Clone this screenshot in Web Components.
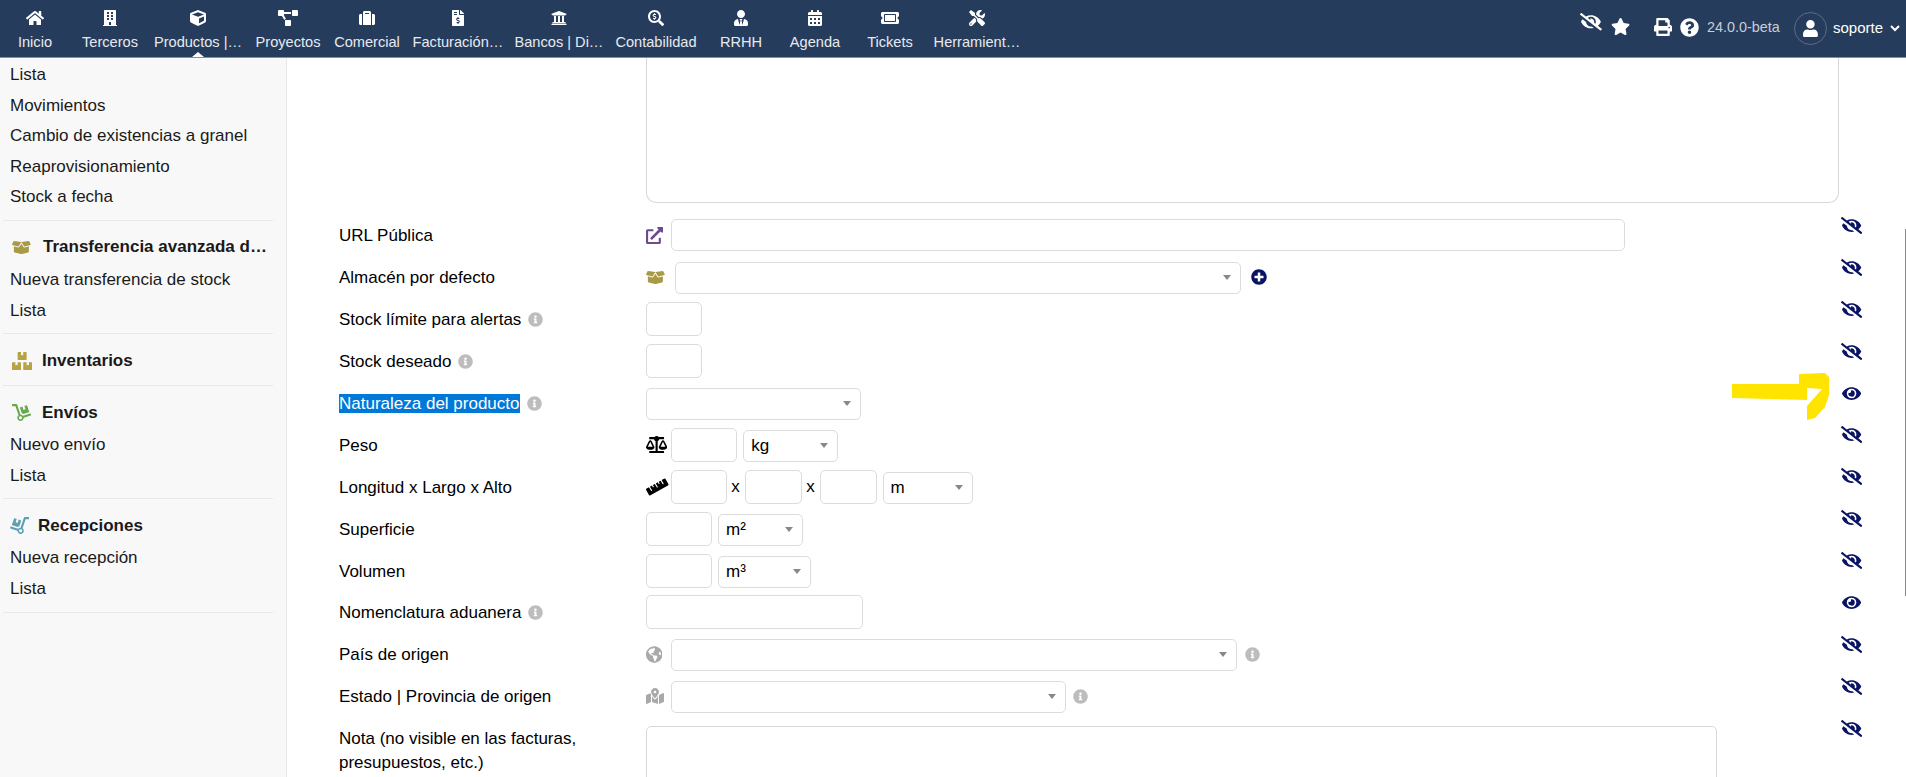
<!DOCTYPE html>
<html lang="es"><head><meta charset="utf-8"><title>Producto</title>
<style>
html,body{margin:0;padding:0;height:100%;overflow:hidden;background:#fff;font-family:"Liberation Sans",Arial,sans-serif;font-size:17px;color:#000}
</style></head><body>
<x-app>
  <x-navbar slot="nav">
    <x-nav-item icon="home" label="Inicio" w="70"></x-nav-item>
    <x-nav-item icon="building" label="Terceros" w="80"></x-nav-item>
    <x-nav-item icon="cube" label="Productos |…" w="96" active></x-nav-item>
    <x-nav-item icon="diagram" label="Proyectos" w="84"></x-nav-item>
    <x-nav-item icon="suitcase" label="Comercial" w="74"></x-nav-item>
    <x-nav-item icon="invoice" label="Facturación…" w="108"></x-nav-item>
    <x-nav-item icon="bank" label="Bancos | Di…" w="94"></x-nav-item>
    <x-nav-item icon="searchdollar" label="Contabilidad" w="100"></x-nav-item>
    <x-nav-item icon="usertie" label="RRHH" w="70"></x-nav-item>
    <x-nav-item icon="calendar" label="Agenda" w="78"></x-nav-item>
    <x-nav-item icon="ticket" label="Tickets" w="72"></x-nav-item>
    <x-nav-item icon="tools" label="Herramient…" w="102"></x-nav-item>
  </x-navbar>
  <x-sidebar slot="side">
    <x-side-section>
      <x-side-link>Lista</x-side-link><x-side-link>Movimientos</x-side-link><x-side-link>Cambio de existencias a granel</x-side-link><x-side-link>Reaprovisionamiento</x-side-link><x-side-link>Stock a fecha</x-side-link>
    </x-side-section>
    <x-side-section title-text="Transferencia avanzada d…" icon="boxopen" color="#a99a45" isize="15" iw="31">
      <x-side-link>Nueva transferencia de stock</x-side-link><x-side-link>Lista</x-side-link>
    </x-side-section>
    <x-side-section title-text="Inventarios" icon="boxes" color="#b5a345" isize="18" iw="30">
      </x-side-section>
    <x-side-section title-text="Envíos" icon="dolly" color="#6aa84f" isize="17" iw="30">
      <x-side-link>Nuevo envío</x-side-link><x-side-link>Lista</x-side-link>
    </x-side-section>
    <x-side-section title-text="Recepciones" icon="dolly" color="#5f9fb3" isize="17" iw="28" flip start="0">
      <x-side-link>Nueva recepción</x-side-link><x-side-link>Lista</x-side-link>
    </x-side-section>
  </x-sidebar>
  <x-form-area slot="main">
    <x-top-note></x-top-note>
    <x-form-row label="URL Pública"><x-icon name="external" size="17" color="#6c4a8d" style="margin-right:8px"></x-icon><x-field w="954" style="height:32px;margin-bottom:1px"></x-field></x-form-row>
    <x-form-row label="Almacén por defecto"><x-icon name="boxopen" size="15" color="#a99a45" style="margin-right:10px"></x-icon><x-pick w="566"></x-pick><x-icon name="plus" size="16" color="#0a1464" style="margin-left:10px"></x-icon></x-form-row>
    <x-form-row label="Stock límite para alertas" info><x-field w="56"></x-field></x-form-row>
    <x-form-row label="Stock deseado" info><x-field w="56"></x-field></x-form-row>
    <x-form-row label="Naturaleza del producto" info selected><x-pick w="215"></x-pick></x-form-row>
    <x-form-row label="Peso"><x-icon name="scale" size="17" color="#000" style="margin-right:4px"></x-icon><x-field w="66"></x-field><x-pick w="95" style="margin-left:6px">kg</x-pick></x-form-row>
    <x-form-row label="Longitud x Largo x Alto"><x-icon name="ruler" size="18" color="#000" style="margin-right:2px"></x-icon><x-field w="56"></x-field><x-sep>x</x-sep><x-field w="57"></x-field><x-sep>x</x-sep><x-field w="57"></x-field><x-pick w="90" style="margin-left:6px">m</x-pick></x-form-row>
    <x-form-row label="Superficie"><x-field w="66"></x-field><x-pick w="85" style="margin-left:6px">m²</x-pick></x-form-row>
    <x-form-row label="Volumen"><x-field w="66"></x-field><x-pick w="93" style="margin-left:6px">m³</x-pick></x-form-row>
    <x-form-row label="Nomenclatura aduanera" info><x-field w="217"></x-field></x-form-row>
    <x-form-row label="País de origen"><x-icon name="globe" size="17" color="#a9a9a9" style="margin-right:8.6px"></x-icon><x-pick w="566"></x-pick><x-icon name="info" size="15" color="#bdbdbd" style="margin-left:8px"></x-icon></x-form-row>
    <x-form-row label="Estado | Provincia de origen"><x-icon name="map" size="16" color="#a9a9a9" style="margin-right:7px"></x-icon><x-pick w="395"></x-pick><x-icon name="info" size="15" color="#bdbdbd" style="margin-left:7px"></x-icon></x-form-row>
    <x-note-row label="Nota (no visible en las facturas, presupuestos, etc.)"></x-note-row>
  </x-form-area>
  <x-eye-column slot="eyes" open="4,9" count="13"></x-eye-column>
</x-app>
<script>
const P={
home:[576,"M280.37 148.26L96 300.11V464a16 16 0 0 0 16 16l112.06-.29a16 16 0 0 0 15.92-16V368a16 16 0 0 1 16-16h64a16 16 0 0 1 16 16v95.64a16 16 0 0 0 16 16.05L464 480a16 16 0 0 0 16-16V300L295.67 148.26a12.19 12.19 0 0 0-15.3 0zM571.6 251.47L488 182.56V44.05a12 12 0 0 0-12-12h-56a12 12 0 0 0-12 12v72.61L318.47 43a48 48 0 0 0-61 0L4.34 251.47a12 12 0 0 0-1.6 16.9l25.5 31A12 12 0 0 0 45.15 301l235.22-193.74a12.19 12.19 0 0 1 15.3 0L530.9 301a12 12 0 0 0 16.9-1.6l25.5-31a12 12 0 0 0-1.7-16.93z"],
eye:[576,"M572.52 241.4C518.29 135.59 410.93 64 288 64S57.68 135.64 3.48 241.41a32.35 32.35 0 0 0 0 29.19C57.71 376.41 165.07 448 288 448s230.32-71.64 284.52-177.41a32.35 32.35 0 0 0 0-29.19zM288 400a144 144 0 1 1 144-144 143.93 143.93 0 0 1-144 144zm0-240a95.31 95.31 0 0 0-25.31 3.79 47.85 47.85 0 0 1-66.9 66.9A95.78 95.78 0 1 0 288 160z"],
eyeslash:[640,"M320 400c-75.85 0-137.25-58.71-142.9-133.11L72.2 185.82c-13.79 17.3-26.48 35.59-36.72 55.59a32.35 32.35 0 0 0 0 29.19C89.71 376.41 197.07 448 320 448c26.91 0 52.87-4 77.89-10.46L346 397.39a144.13 144.13 0 0 1-26 2.61zm313.82 58.1l-110.55-85.44a331.25 331.25 0 0 0 81.25-102.07 32.35 32.35 0 0 0 0-29.19C550.29 135.59 442.93 64 320 64a308.15 308.15 0 0 0-147.32 37.7L45.46 3.37A16 16 0 0 0 23 6.18L3.37 31.45A16 16 0 0 0 6.18 53.9l588.36 454.73a16 16 0 0 0 22.46-2.81l19.64-25.27a16 16 0 0 0-2.82-22.45zm-183.72-142l-39.3-30.38A94.75 94.75 0 0 0 416 256a94.76 94.76 0 0 0-121.31-92.21A47.65 47.65 0 0 1 304 192a46.64 46.64 0 0 1-1.54 10l-73.61-56.89A142.31 142.31 0 0 1 320 112a143.92 143.92 0 0 1 144 144c0 21.63-5.29 41.79-13.9 60.11z"],
star:[576,"M259.3 17.8L194 150.2 47.9 171.5c-26.2 3.8-36.7 36.1-17.7 54.6l105.7 103-25 145.5c-4.5 26.3 23.2 46 46.4 33.7L288 439.6l130.7 68.7c23.2 12.2 50.9-7.4 46.4-33.7l-25-145.5 105.7-103c19-18.5 8.5-50.8-17.7-54.6L382 150.2 316.7 17.8c-11.7-23.6-45.6-23.9-57.4 0z"],
print:[512,"M448 192V77.25c0-8.49-3.37-16.62-9.37-22.63L393.37 9.37c-6-6-14.14-9.37-22.63-9.37H96C78.33 0 64 14.33 64 32v160c-35.35 0-64 28.65-64 64v112c0 8.84 7.16 16 16 16h48v96c0 17.67 14.33 32 32 32h320c17.67 0 32-14.33 32-32v-96h48c8.84 0 16-7.16 16-16V256c0-35.35-28.65-64-64-64zm-64 256H128v-96h256v96zm0-224H128V64h192v48c0 8.84 7.16 16 16 16h48v96zm48 72c-13.25 0-24-10.75-24-24 0-13.26 10.75-24 24-24s24 10.74 24 24c0 13.25-10.75 24-24 24z"],
question:[512,"M504 256c0 136.997-111.043 248-248 248S8 392.997 8 256C8 119.083 119.043 8 256 8s248 111.083 248 248zM262.655 90c-54.497 0-89.255 22.957-116.549 63.758-3.536 5.286-2.353 12.415 2.715 16.258l34.699 26.31c5.205 3.947 12.621 3.008 16.665-2.122 17.864-22.658 30.113-35.797 57.303-35.797 20.429 0 45.698 13.148 45.698 32.958 0 14.976-12.363 22.667-32.534 33.976C247.128 238.528 216 254.941 216 296v4c0 6.627 5.373 12 12 12h56c6.627 0 12-5.373 12-12v-1.333c0-28.462 83.186-29.647 83.186-106.667 0-58.002-60.165-102-116.531-102zM256 338c-25.365 0-46 20.635-46 46 0 25.364 20.635 46 46 46s46-20.636 46-46c0-25.365-20.635-46-46-46z"],
info:[512,"M256 8C119.043 8 8 119.083 8 256c0 136.997 111.043 248 248 248s248-111.003 248-248C504 119.083 392.957 8 256 8zm0 110c23.196 0 42 18.804 42 42s-18.804 42-42 42-42-18.804-42-42 18.804-42 42-42zm56 254c0 6.627-5.373 12-12 12h-88c-6.627 0-12-5.373-12-12v-24c0-6.627 5.373-12 12-12h12v-64h-12c-6.627 0-12-5.373-12-12v-24c0-6.627 5.373-12 12-12h64c6.627 0 12 5.373 12 12v100h12c6.627 0 12 5.373 12 12v24z"],
plus:[512,"M256 8C119 8 8 119 8 256s111 248 248 248 248-111 248-248S393 8 256 8zm144 276c0 6.6-5.4 12-12 12h-92v92c0 6.6-5.4 12-12 12h-56c-6.6 0-12-5.4-12-12v-92h-92c-6.6 0-12-5.4-12-12v-56c0-6.6 5.4-12 12-12h92v-92c0-6.6 5.4-12 12-12h56c6.6 0 12 5.4 12 12v92h92c6.6 0 12 5.4 12 12v56z"],
user:[448,"M224 256c70.7 0 128-57.3 128-128S294.7 0 224 0 96 57.3 96 128s57.3 128 128 128zm89.6 32h-16.7c-22.2 10.2-46.9 16-72.9 16s-50.6-5.8-72.9-16h-16.7C60.2 288 0 348.2 0 422.4V464c0 26.5 21.5 48 48 48h352c26.5 0 48-21.5 48-48v-41.6c0-74.2-60.2-134.4-134.4-134.4z"],
external:[512,"M432,320H400a16,16,0,0,0-16,16V448H64V128H208a16,16,0,0,0,16-16V80a16,16,0,0,0-16-16H48A48,48,0,0,0,0,112V464a48,48,0,0,0,48,48H400a48,48,0,0,0,48-48V336A16,16,0,0,0,432,320ZM488,0h-128c-21.37,0-32.05,25.91-17,41l35.73,35.73L135,320.37a24,24,0,0,0,0,34L157.67,377a24,24,0,0,0,34,0L435.28,133.32,471,169c15,15,41,4.5,41-17V24A24,24,0,0,0,488,0Z"],
building:[448,"M436 480h-20V24c0-13.255-10.745-24-24-24H56C42.745 0 32 10.745 32 24v456H12c-6.627 0-12 5.373-12 12v20h448v-20c0-6.627-5.373-12-12-12zM128 76c0-6.627 5.373-12 12-12h40c6.627 0 12 5.373 12 12v40c0 6.627-5.373 12-12 12h-40c-6.627 0-12-5.373-12-12V76zm0 96c0-6.627 5.373-12 12-12h40c6.627 0 12 5.373 12 12v40c0 6.627-5.373 12-12 12h-40c-6.627 0-12-5.373-12-12v-40zm52 148h-40c-6.627 0-12-5.373-12-12v-40c0-6.627 5.373-12 12-12h40c6.627 0 12 5.373 12 12v40c0 6.627-5.373 12-12 12zm76 160h-64v-84c0-6.627 5.373-12 12-12h40c6.627 0 12 5.373 12 12v84zm64-172c0 6.627-5.373 12-12 12h-40c-6.627 0-12-5.373-12-12v-40c0-6.627 5.373-12 12-12h40c6.627 0 12 5.373 12 12v40zm0-96c0 6.627-5.373 12-12 12h-40c-6.627 0-12-5.373-12-12v-40c0-6.627 5.373-12 12-12h40c6.627 0 12 5.373 12 12v40zm0-96c0 6.627-5.373 12-12 12h-40c-6.627 0-12-5.373-12-12V76c0-6.627 5.373-12 12-12h40c6.627 0 12 5.373 12 12v40z"],
cube:[512,"M239.1 6.3l-208 78c-18.7 7-31.1 25-31.1 45v225.1c0 18.2 10.3 34.8 26.5 42.9l208 104c13.5 6.8 29.4 6.8 42.9 0l208-104c16.3-8.1 26.5-24.8 26.5-42.9V129.3c0-20-12.4-37.9-31.1-44.9l-208-78C262 2.2 250 2.2 239.1 6.3zM256 68.4l192 72v1.1l-192 78-192-78v-1.1l192-72zm32 356V275.5l160-65v133.9l-160 80z"],
diagram:[640,"M384 320H256c-17.67 0-32 14.33-32 32v128c0 17.67 14.33 32 32 32h128c17.67 0 32-14.33 32-32V352c0-17.67-14.33-32-32-32zM192 32c0-17.67-14.33-32-32-32H32C14.33 0 0 14.33 0 32v128c0 17.67 14.33 32 32 32h95.72l73.16 128.04C211.98 300.98 232.4 288 256 288h.28L192 175.51V128h224V64H192V32zM608 0H480c-17.67 0-32 14.33-32 32v128c0 17.67 14.33 32 32 32h128c17.67 0 32-14.33 32-32V32c0-17.67-14.33-32-32-32z"],
suitcase:[512,"M128 480h256V80c0-26.5-21.5-48-48-48H176c-26.5 0-48 21.5-48 48v400zm64-384h128v32H192V96zm320 80v256c0 26.5-21.5 48-48 48h-48V128h48c26.5 0 48 21.5 48 48zM96 480H48c-26.5 0-48-21.5-48-48V176c0-26.5 21.5-48 48-48h48v352z"],
invoice:[384,"M377 105L279.1 7c-4.5-4.5-10.6-7-17-7H256v128h128v-6.1c0-6.3-2.5-12.4-7-16.9zm-153 31V0H24C10.7 0 0 10.7 0 24v464c0 13.3 10.7 24 24 24h336c13.3 0 24-10.7 24-24V160H248c-13.2 0-24-10.8-24-24zM64 72c0-4.42 3.58-8 8-8h80c4.42 0 8 3.58 8 8v16c0 4.42-3.58 8-8 8H72c-4.42 0-8-3.58-8-8V72zm0 80v-16c0-4.42 3.58-8 8-8h80c4.42 0 8 3.58 8 8v16c0 4.42-3.58 8-8 8H72c-4.42 0-8-3.58-8-8zm144 263.88V440c0 4.42-3.58 8-8 8h-16c-4.42 0-8-3.58-8-8v-24.29c-11.29-.58-22.27-4.52-31.37-11.35-3.9-2.93-4.1-8.77-.57-12.14l11.75-11.21c2.77-2.64 6.89-2.76 10.13-.73 3.87 2.42 8.26 3.72 12.82 3.72h28.11c6.5 0 11.8-5.92 11.8-13.19 0-5.95-3.61-11.19-8.77-12.73l-45-13.5c-18.59-5.58-31.58-23.42-31.58-43.39 0-24.52 19.05-44.44 42.67-45.07V232c0-4.42 3.58-8 8-8h16c4.42 0 8 3.58 8 8v24.29c11.29.58 22.27 4.51 31.37 11.35 3.9 2.93 4.1 8.77.57 12.14l-11.75 11.21c-2.77 2.64-6.89 2.76-10.13.73-3.87-2.43-8.26-3.72-12.82-3.72h-28.11c-6.5 0-11.8 5.92-11.8 13.19 0 5.95 3.61 11.19 8.77 12.73l45 13.5c18.59 5.58 31.58 23.42 31.58 43.39 0 24.53-19.05 44.44-42.67 45.07z"],
bank:[512,"M496 128v16a8 8 0 0 1-8 8h-24v12c0 6.627-5.373 12-12 12H60c-6.627 0-12-5.373-12-12v-12H24a8 8 0 0 1-8-8v-16a8 8 0 0 1 4.941-7.392l232-88a7.996 7.996 0 0 1 6.118 0l232 88A8 8 0 0 1 496 128zm-24 304H40c-13.255 0-24 10.745-24 24v16a8 8 0 0 0 8 8h464a8 8 0 0 0 8-8v-16c0-13.255-10.745-24-24-24zM96 192v192H60c-6.627 0-12 5.373-12 12v20h416v-20c0-6.627-5.373-12-12-12h-36V192h-64v192h-64V192h-64v192h-64V192H96z"],
searchdollar:[512,"M505.04 442.66l-99.71-99.69c-4.5-4.5-10.6-7-17-7h-16.3c27.6-35.3 44-79.69 44-127.99C416.03 93.09 322.92 0 208.02 0S0 93.09 0 207.98s93.11 207.98 208.02 207.98c48.3 0 92.71-16.4 128.01-44v16.3c0 6.4 2.5 12.5 7 17l99.71 99.69c9.4 9.4 24.6 9.4 33.9 0l28.3-28.3c9.4-9.4 9.4-24.6.1-34zm-297.02-90.7c-79.54 0-144-64.34-144-143.98 0-79.53 64.35-143.98 144-143.98 79.54 0 144 64.34 144 143.98 0 79.53-64.35 143.98-144 143.98zm27.11-152.54l-45.01-13.5c-5.16-1.55-8.77-6.78-8.77-12.73 0-7.27 5.3-13.19 11.8-13.19h28.11c4.56 0 8.96 1.29 12.82 3.72 3.24 2.03 7.36 1.91 10.13-.73l11.75-11.21c3.53-3.37 3.33-9.21-.57-12.14-9.1-6.83-20.08-10.77-31.37-11.35V112c0-4.42-3.58-8-8-8h-16c-4.42 0-8 3.58-8 8v16.12c-23.63.63-42.68 20.55-42.68 45.07 0 19.97 12.99 37.81 31.58 43.39l45.01 13.5c5.16 1.55 8.77 6.78 8.77 12.73 0 7.27-5.3 13.19-11.8 13.19h-28.1c-4.56 0-8.96-1.29-12.82-3.72-3.24-2.03-7.36-1.91-10.13.73l-11.75 11.21c-3.53 3.37-3.33 9.21.57 12.14 9.1 6.83 20.08 10.77 31.37 11.35V304c0 4.42 3.58 8 8 8h16c4.42 0 8-3.58 8-8v-16.12c23.63-.63 42.68-20.54 42.68-45.07 0-19.97-12.99-37.81-31.59-43.39z"],
usertie:[448,"M224 256c70.7 0 128-57.3 128-128S294.7 0 224 0 96 57.3 96 128s57.3 128 128 128zm95.8 32.6L272 480l-32-136 32-56h-96l32 56-32 136-47.8-191.4C56.9 292 0 350.3 0 422.4V464c0 26.5 21.5 48 48 48h352c26.5 0 48-21.5 48-48v-41.6c0-72.1-56.9-130.4-128.2-133.8z"],
calendar:[448,"M0 464c0 26.5 21.5 48 48 48h352c26.5 0 48-21.5 48-48V192H0v272zm320-196c0-6.6 5.4-12 12-12h40c6.6 0 12 5.4 12 12v40c0 6.6-5.4 12-12 12h-40c-6.6 0-12-5.4-12-12v-40zm0 128c0-6.6 5.4-12 12-12h40c6.6 0 12 5.4 12 12v40c0 6.6-5.4 12-12 12h-40c-6.6 0-12-5.4-12-12v-40zM192 268c0-6.6 5.4-12 12-12h40c6.6 0 12 5.4 12 12v40c0 6.6-5.4 12-12 12h-40c-6.6 0-12-5.4-12-12v-40zm0 128c0-6.6 5.4-12 12-12h40c6.6 0 12 5.4 12 12v40c0 6.6-5.4 12-12 12h-40c-6.6 0-12-5.4-12-12v-40zM64 268c0-6.6 5.4-12 12-12h40c6.6 0 12 5.4 12 12v40c0 6.6-5.4 12-12 12H76c-6.6 0-12-5.4-12-12v-40zm0 128c0-6.6 5.4-12 12-12h40c6.6 0 12 5.4 12 12v40c0 6.6-5.4 12-12 12H76c-6.6 0-12-5.4-12-12v-40zM400 64h-48V16c0-8.8-7.2-16-16-16h-32c-8.8 0-16 7.2-16 16v48H160V16c0-8.8-7.2-16-16-16h-32c-8.8 0-16 7.2-16 16v48H48C21.5 64 0 85.5 0 112v48h448v-48c0-26.5-21.5-48-48-48z"],
ticket:[576,"M128 160h320v192H128V160zm400 96c0 26.51 21.49 48 48 48v96c0 26.51-21.49 48-48 48H48c-26.51 0-48-21.49-48-48v-96c26.51 0 48-21.49 48-48s-21.49-48-48-48v-96c0-26.51 21.49-48 48-48h480c26.51 0 48 21.49 48 48v96c-26.51 0-48 21.49-48 48zm-48-104c0-13.255-10.745-24-24-24H120c-13.255 0-24 10.745-24 24v208c0 13.255 10.745 24 24 24h336c13.255 0 24-10.745 24-24V152z"],
tools:[512,"M501.1 395.7L384 278.6c-23.1-23.1-57.6-27.6-85.4-13.9L192 158.1V96L64 0 0 64l96 128h62.1l106.6 106.6c-13.6 27.8-9.2 62.3 13.9 85.4l117.1 117.1c14.6 14.6 38.2 14.6 52.7 0l52.7-52.7c14.5-14.6 14.5-38.2 0-52.7zM331.7 225c28.3 0 54.9 11 74.9 31l19.4 19.4c15.8-6.9 30.8-16.5 43.8-29.5 37.1-37.1 49.7-89.3 37.9-136.7-2.2-9-13.5-12.1-20.1-5.5l-74.4 74.4-67.9-11.3L334 98.9l74.4-74.4c6.6-6.6 3.4-17.9-5.7-20.2-47.4-11.7-99.6.9-136.6 37.9-28.5 28.5-41.9 66.1-41.2 103.6l82.1 82.1c8.1-1.9 16.5-2.9 24.7-2.9zm-103.9 82l-56.7-56.7L18.7 402.8c-25 25-25 65.5 0 90.5s65.5 25 90.5 0l123.6-123.6c-7.6-19.9-9.9-41.6-5-62.7zM64 472c-13.2 0-24-10.8-24-24 0-13.3 10.7-24 24-24s24 10.7 24 24c0 13.2-10.7 24-24 24z"],
scale:[640,"M256 336h-.02c0-16.18 1.34-8.73-85.05-181.51-17.65-35.29-68.19-35.36-85.87 0C-2.06 328.75.02 320.33.02 336H0c0 44.18 57.31 80 128 80s128-35.82 128-80zM128 176l72 144H56l72-144zm511.98 160c0-16.18 1.34-8.73-85.05-181.51-17.65-35.29-68.19-35.36-85.87 0-87.12 174.26-85.04 165.84-85.04 181.51H384c0 44.18 57.31 80 128 80s128-35.82 128-80h-.02zM440 320l72-144 72 144H440zm88 128H352V153.25c23.51-10.29 41.16-31.48 46.39-57.25H528c8.84 0 16-7.16 16-16V48c0-8.84-7.16-16-16-16H383.64C369.04 12.68 346.09 0 320 0s-49.04 12.68-63.64 32H112c-8.84 0-16 7.16-16 16v32c0 8.84 7.16 16 16 16h129.61c5.23 25.76 22.87 46.96 46.39 57.25V448H112c-8.84 0-16 7.16-16 16v32c0 8.84 7.16 16 16 16h416c8.84 0 16-7.16 16-16v-32c0-8.84-7.16-16-16-16z"],
ruler:[640,"M635.7 167.2L556.1 31.7c-8.8-15-28.3-20.1-43.5-11.5l-69 39.1L503.3 161c2.2 3.8.9 8.5-2.9 10.7l-13.8 7.8c-3.8 2.2-8.7.9-10.9-2.9L416 75l-55.2 31.3 27.9 47.4c2.2 3.8.9 8.5-2.9 10.7l-13.8 7.8c-3.8 2.2-8.7.9-10.9-2.9L333.2 122 278 153.3 337.8 255c2.2 3.7.9 8.5-2.9 10.7l-13.8 7.8c-3.8 2.2-8.7.9-10.9-2.9l-59.7-101.7-55.2 31.3 27.9 47.4c2.2 3.8.9 8.5-2.9 10.7l-13.8 7.8c-3.8 2.2-8.7.9-10.9-2.9l-27.9-47.5-55.2 31.3 59.7 101.7c2.2 3.7.9 8.5-2.9 10.7l-13.8 7.8c-3.8 2.2-8.7.9-10.9-2.9L84.9 262.9l-69 39.1C.7 310.7-4.6 329.8 4.2 344.8l79.6 135.6c8.8 15 28.3 20.1 43.5 11.5L624.1 210c15.2-8.6 20.4-27.8 11.6-42.8z"],
globe:[496,"M248 8C111.03 8 0 119.03 0 256s111.03 248 248 248 248-111.03 248-248S384.97 8 248 8zm82.29 357.6c-3.9 3.88-7.99 7.95-11.31 11.28-2.99 3-5.1 6.7-6.17 10.71-1.51 5.66-2.73 11.38-4.77 16.87l-17.39 46.85c-13.76 3-28 4.69-42.65 4.69v-27.38c1.69-12.62-7.64-36.26-22.63-51.25-6-6-9.37-14.14-9.37-22.63v-32.01c0-11.64-6.27-22.34-16.46-27.97-14.37-7.95-34.81-19.06-48.81-26.11-11.48-5.78-22.1-13.14-31.65-21.75l-.8-.72a114.792 114.792 0 0 1-18.06-20.74c-9.38-13.77-24.66-36.42-34.59-51.14 20.47-45.5 57.36-82.04 103.2-101.89l24.01 12.01C203.48 89.74 216 82.01 216 70.11v-11.3c7.99-1.29 16.12-2.11 24.39-2.42l28.3 28.3c6.25 6.25 6.25 16.38 0 22.63L264 112l-10.34 10.34c-3.12 3.12-3.12 8.19 0 11.31l4.69 4.69c3.12 3.12 3.12 8.19 0 11.31l-8 8a8.008 8.008 0 0 1-5.66 2.34h-8.99c-2.08 0-4.08.81-5.58 2.27l-9.92 9.65a8.008 8.008 0 0 0-1.58 9.31l15.59 31.19c2.66 5.32-1.21 11.58-7.15 11.58h-5.64c-1.93 0-3.79-.7-5.24-1.96l-9.28-8.06a16.017 16.017 0 0 0-15.55-3.1l-31.17 10.39a11.95 11.95 0 0 0-8.17 11.34c0 4.53 2.56 8.66 6.61 10.69l11.08 5.54c9.41 4.71 19.79 7.16 30.31 7.16s22.59 27.29 32 32h66.75c8.49 0 16.62 3.37 22.63 9.37l13.69 13.69a30.503 30.503 0 0 1 8.93 21.57 46.536 46.536 0 0 1-13.72 32.98zM417 274.25c-5.79-1.45-10.84-5-14.15-9.97l-17.98-26.97a23.97 23.97 0 0 1 0-26.62l19.59-29.38c2.32-3.47 5.5-6.29 9.24-8.15l12.98-6.49C440.2 193.59 448 223.87 448 256c0 8.67-.74 17.16-1.82 25.54L417 274.25z"],
map:[576,"M288 0c-69.59 0-126 56.41-126 126 0 56.26 82.35 158.8 113.9 196.02 6.39 7.54 17.82 7.54 24.2 0C331.65 284.8 414 182.26 414 126 414 56.41 357.59 0 288 0zm0 168c-23.2 0-42-18.8-42-42s18.8-42 42-42 42 18.8 42 42-18.8 42-42 42zM20.12 215.95A32.006 32.006 0 0 0 0 245.66v250.32c0 11.32 11.43 19.06 21.94 14.86L160 448V214.92c-8.84-15.98-16.07-31.54-21.25-46.42L20.12 215.95zM288 359.67c-14.07 0-27.38-6.18-36.51-16.96-19.66-23.2-40.57-49.62-59.49-76.72v182l192 64V266c-18.92 27.09-39.82 53.52-59.49 76.72-9.13 10.77-22.44 16.95-36.51 16.95zm266.06-198.51L416 224v288l139.88-55.95A31.996 31.996 0 0 0 576 426.34V176.02c0-11.32-11.43-19.06-21.94-14.86z"],
boxopen:[640,"M425.7 256c-16.9 0-32.8-9-41.4-23.4L320 126l-64.2 106.6c-8.7 14.5-24.6 23.5-41.5 23.5-4.5 0-9-.6-13.3-1.9L64 215v178c0 14.7 10 27.5 24.2 31l216.2 54.1c10.2 2.5 20.9 2.5 31 0L551.8 424c14.2-3.6 24.2-16.4 24.2-31V215l-137 39.1c-4.3 1.3-8.8 1.9-13.3 1.9zm212.6-112.2L586.8 41c-3.1-6.2-9.8-9.8-16.7-8.9L320 64l91.7 152.1c3.8 6.3 11.4 9.3 18.5 7.3l197.9-56.5c9.9-2.9 14.7-13.9 10.2-23.1zM53.2 41L1.7 143.8c-4.6 9.2.3 20.2 10.1 23l197.9 56.5c7.1 2 14.7-1 18.5-7.3L320 64 69.8 32.1c-6.9-.8-13.5 2.7-16.6 8.9z"],
boxes:[576,"M560 288h-80v96l-32-21.3-32 21.3v-96h-80c-8.8 0-16 7.2-16 16v192c0 8.8 7.2 16 16 16h224c8.8 0 16-7.2 16-16V304c0-8.8-7.2-16-16-16zm-384-64h224c8.8 0 16-7.2 16-16V16c0-8.8-7.2-16-16-16h-80v96l-32-21.3L256 96V0h-80c-8.8 0-16 7.2-16 16v192c0 8.8 7.2 16 16 16zm64 64h-80v96l-32-21.3L96 384v-96H16c-8.8 0-16 7.2-16 16v192c0 8.8 7.2 16 16 16h224c8.8 0 16-7.2 16-16V304c0-8.8-7.2-16-16-16z"],
dolly:[576,"M294.2 277.7c18 5 34.7 13.4 49.5 24.7l161.5-53.8c8.4-2.8 12.9-11.9 10.1-20.2L454.9 47.2c-2.8-8.4-11.9-12.9-20.2-10.1l-61.1 20.4 33.1 99.4L346 177l-33.1-99.4-61.6 20.5c-8.4 2.8-12.9 11.9-10.1 20.2l53 159.4zm281 48.7L565 296c-2.8-8.4-11.9-12.9-20.2-10.1l-213.5 71.2c-17.2-22-43.6-36.4-73.5-37L158.4 21.9C154 8.8 141.8 0 128 0H16C7.2 0 0 7.2 0 16v32c0 8.8 7.2 16 16 16h88.9l92.2 276.7c-26.1 20.4-41.7 53.6-36 90.5 6.1 39.4 37.9 72.3 77.3 79.2 60.2 10.7 112.3-34.8 113.4-92.6l213.3-71.2c8.3-2.8 12.9-11.8 10.1-20.2zM256 464c-26.5 0-48-21.5-48-48s21.5-48 48-48 48 21.5 48 48-21.5 48-48 48z"]
};
function def(name,css,html,init){
  customElements.define(name,class extends HTMLElement{
    constructor(){super();this.attachShadow({mode:'open'});}
    connectedCallback(){
      if(this._done)return;this._done=1;
      this.shadowRoot.innerHTML='<style>'+css+'</style>'+(typeof html==='function'?html(this):html);
      if(init)init(this);
    }
  });
}
def('x-icon',':host{display:inline-flex;flex:none;line-height:0}svg{display:block}',el=>{
  const n=el.getAttribute('name'),s=+el.getAttribute('size')||16,c=el.getAttribute('color')||'currentColor',p=P[n];
  const f=el.hasAttribute('flip')?' style="transform:scaleX(-1)"':'';
  return `<svg xmlns="http://www.w3.org/2000/svg" viewBox="0 0 ${p[0]} 512" width="${s*p[0]/512}" height="${s}"${f} aria-hidden="true"><path fill="${c}" d="${p[1]}"/></svg>`;
});
def('x-app',`:host{display:grid;grid-template-columns:287px 1fr;grid-template-rows:58px 1fr;width:1906px;height:777px;overflow:hidden;position:relative;background:#fff}
.nav{grid-column:1/3}
.body{display:flex;min-width:0;overflow:hidden}
.thumb{position:absolute;left:1905px;top:229px;width:1px;height:367px;background:#8a8a8a}
.mark{position:absolute;left:1728px;top:370px}`,
`<div class="nav"><slot name="nav"></slot></div><div style="overflow:hidden;height:719px"><slot name="side"></slot></div>
<div class="body"><slot name="main"></slot><slot name="eyes"></slot></div>
<div class="thumb"></div>
<svg class="mark" width="106" height="54" viewBox="1728 370 106 54"><path fill="#ffe400" d="M1732 384L1799 384L1799 374L1825 373L1829 377L1829 395L1825 407L1815 418L1807 420L1807 406L1822 389L1807 388L1807 400L1770 399L1732 398Z"/></svg>`);
def('x-navbar',`:host{display:flex;height:57px;background:#263c5c;border-bottom:1px solid #8a8f96;color:#e6eaf0;align-items:stretch}
.l{display:flex}.sp{flex:1}
.r{display:flex;align-items:center;position:relative;width:326px;height:57px;flex:none}
.r>*{position:absolute}
.ver{left:127px;top:17px;font-size:14.4px;line-height:20px;color:#c9ced6}
.av{left:214px;top:12px;width:33px;height:33px;border:1px solid #5b6c86;border-radius:50%;box-sizing:border-box;display:flex;align-items:center;justify-content:center}
.nm{left:253px;top:18px;font-size:15px;line-height:20px;color:#fff}
svg.ch{left:310px;top:25px}`,
`<div class="l"><slot></slot></div><div class="sp"></div>
<div class="r">
<x-icon name="eyeslash" size="17.5" color="#fff" style="left:0;top:13px"></x-icon>
<x-icon name="star" size="17" color="#fff" style="left:31px;top:18px"></x-icon>
<x-icon name="print" size="18" color="#fff" style="left:74px;top:18px"></x-icon>
<x-icon name="question" size="19" color="#fff" style="left:100px;top:18px"></x-icon>
<span class="ver">24.0.0-beta</span>
<span class="av"><x-icon name="user" size="17" color="#fff"></x-icon></span>
<span class="nm">soporte</span>
<svg class="ch" width="10" height="7" viewBox="0 0 10 7"><path d="M1 1l4 4 4-4" fill="none" stroke="#fff" stroke-width="2"/></svg>
</div>`);
def('x-nav-item',`:host{display:flex;flex-direction:column;align-items:center;position:relative;height:57px;box-sizing:border-box;flex:none;color:#e6eaf0}
.i{height:16px;margin-top:10px;display:flex;align-items:center;justify-content:center}
.t{margin-top:7px;font-size:14.6px;line-height:18px;white-space:nowrap}
.tri{position:absolute;left:50%;bottom:0;margin-left:-6px;width:0;height:0;border:6px solid transparent;border-top:0;border-bottom:5px solid #fff}`,
el=>`<div class="i"><x-icon name="${el.getAttribute('icon')}" size="16" color="#fff"></x-icon></div><div class="t">${el.getAttribute('label')}</div>${el.hasAttribute('active')?'<div class="tri"></div>':''}`,
el=>{el.style.width=el.getAttribute('w')+'px';});
def('x-sidebar',`:host{display:block;width:287px;height:719px;box-sizing:border-box;background:#f8f8f8;border-right:1px solid #e6e6e6;padding-top:1px}`,`<slot></slot>`);
def('x-side-section',`:host{display:block;margin:0 13px 0 3px;padding:0 0 8px;border-bottom:1px solid #e8e8e8;margin-bottom:0}
:host(:not(:first-child)){padding-top:7px;margin-top:0}
.h{height:36px;box-sizing:border-box;padding-top:3px;display:flex;align-items:center;font-weight:700;font-size:17px;color:#1a1a1a;white-space:nowrap;padding-left:9px}
.ic{display:flex;justify-content:flex-start;flex:none}`,
el=>{const t=el.getAttribute('title-text');if(!t)return '<slot></slot>';
 const start=el.getAttribute('start');
 return `<div class="h"${start!==null?' style="padding-left:7px"':''}><span class="ic" style="width:${el.getAttribute('iw')}px"><x-icon name="${el.getAttribute('icon')}" size="${el.getAttribute('isize')}" color="${el.getAttribute('color')}"${el.hasAttribute('flip')?' flip':''}></x-icon></span><span>${t}</span></div><slot></slot>`;});
def('x-side-link',`:host{display:block;height:30.6px;line-height:32px;padding-left:7px;font-size:17px;color:#1a1a1a;white-space:nowrap}`,`<slot></slot>`);
def('x-form-area',`:host{display:block;flex:none;width:1554px;height:719px;overflow:hidden;padding-left:52px;box-sizing:border-box}`,`<slot></slot>`);
def('x-top-note',`:host{display:block;margin-left:307px;width:1193px;height:145px;box-sizing:border-box;border:1px solid #d8d8d8;border-top:0;border-radius:0 0 10px 10px;margin-bottom:11.5px}`,``);
def('x-form-row',`:host{display:flex;height:41.9px;align-items:center}
.lab{flex:none;width:307px;margin-top:1px;font-size:17px;line-height:19px;display:flex;align-items:center;color:#000;white-space:nowrap}
.sel{background:#0078d7;color:#fff;height:19px}
.lab x-icon{margin-left:7px}
.val{display:flex;align-items:flex-end;height:34px}
::slotted(x-icon){align-self:center}`,
el=>`<div class="lab"><span class="${el.hasAttribute('selected')?'sel':''}">${el.getAttribute('label')}</span>${el.hasAttribute('info')?'<x-icon name="info" size="15" color="#bdbdbd"></x-icon>':''}</div><div class="val"><slot></slot></div>`);
def('x-field',`:host{display:block;flex:none;height:34px;box-sizing:border-box}
input{display:block;width:100%;height:100%;box-sizing:border-box;border:1px solid #dcdcdc;border-radius:5px;background:#fff;padding:0 6px;margin:0;outline:0}`,`<input type="text" aria-label="campo">`,el=>{el.style.width=el.getAttribute('w')+'px';});
def('x-pick',`:host{display:flex;flex:none;align-items:center;height:32px;box-sizing:border-box;border:1px solid #dcdcdc;border-radius:5px;background:#fff;padding-left:7px;position:relative;font-size:17px;color:#000}
.a{position:absolute;right:9px;top:12px;width:0;height:0;border:4px solid transparent;border-bottom:0;border-top:5px solid #888}`,
`<slot></slot><span class="a"></span>`,el=>{el.style.width=el.getAttribute('w')+'px';});
def('x-sep',`:host{display:flex;flex:none;width:18px;height:34px;align-items:center;justify-content:center;font-size:17px}`,`<slot></slot>`);
def('x-note-row',`:host{display:flex;padding-top:8.7px}
.lab{flex:none;width:260px;margin-right:47px;font-size:17px;line-height:24.5px;padding-top:1px}
.ta{flex:none;width:1071px;height:200px;box-sizing:border-box;border:1px solid #d8d8d8;border-radius:5px}`,
el=>`<div class="lab">${el.getAttribute('label')}</div><div class="ta"></div>`);
def('x-eye-column',`:host{display:block;flex:none;width:21px;padding-top:146.5px}
div{height:41.9px;display:flex;align-items:center;justify-content:center}`,
el=>{const o=el.getAttribute('open').split(','),n=+el.getAttribute('count');let h='';
 for(let i=0;i<n;i++){h+=o.includes(String(i))?'<div><x-icon name="eye" size="17" color="#0a1464"></x-icon></div>':'<div><x-icon name="eyeslash" size="17" color="#0a1464"></x-icon></div>';}
 return h;});
</script>
</body></html>
